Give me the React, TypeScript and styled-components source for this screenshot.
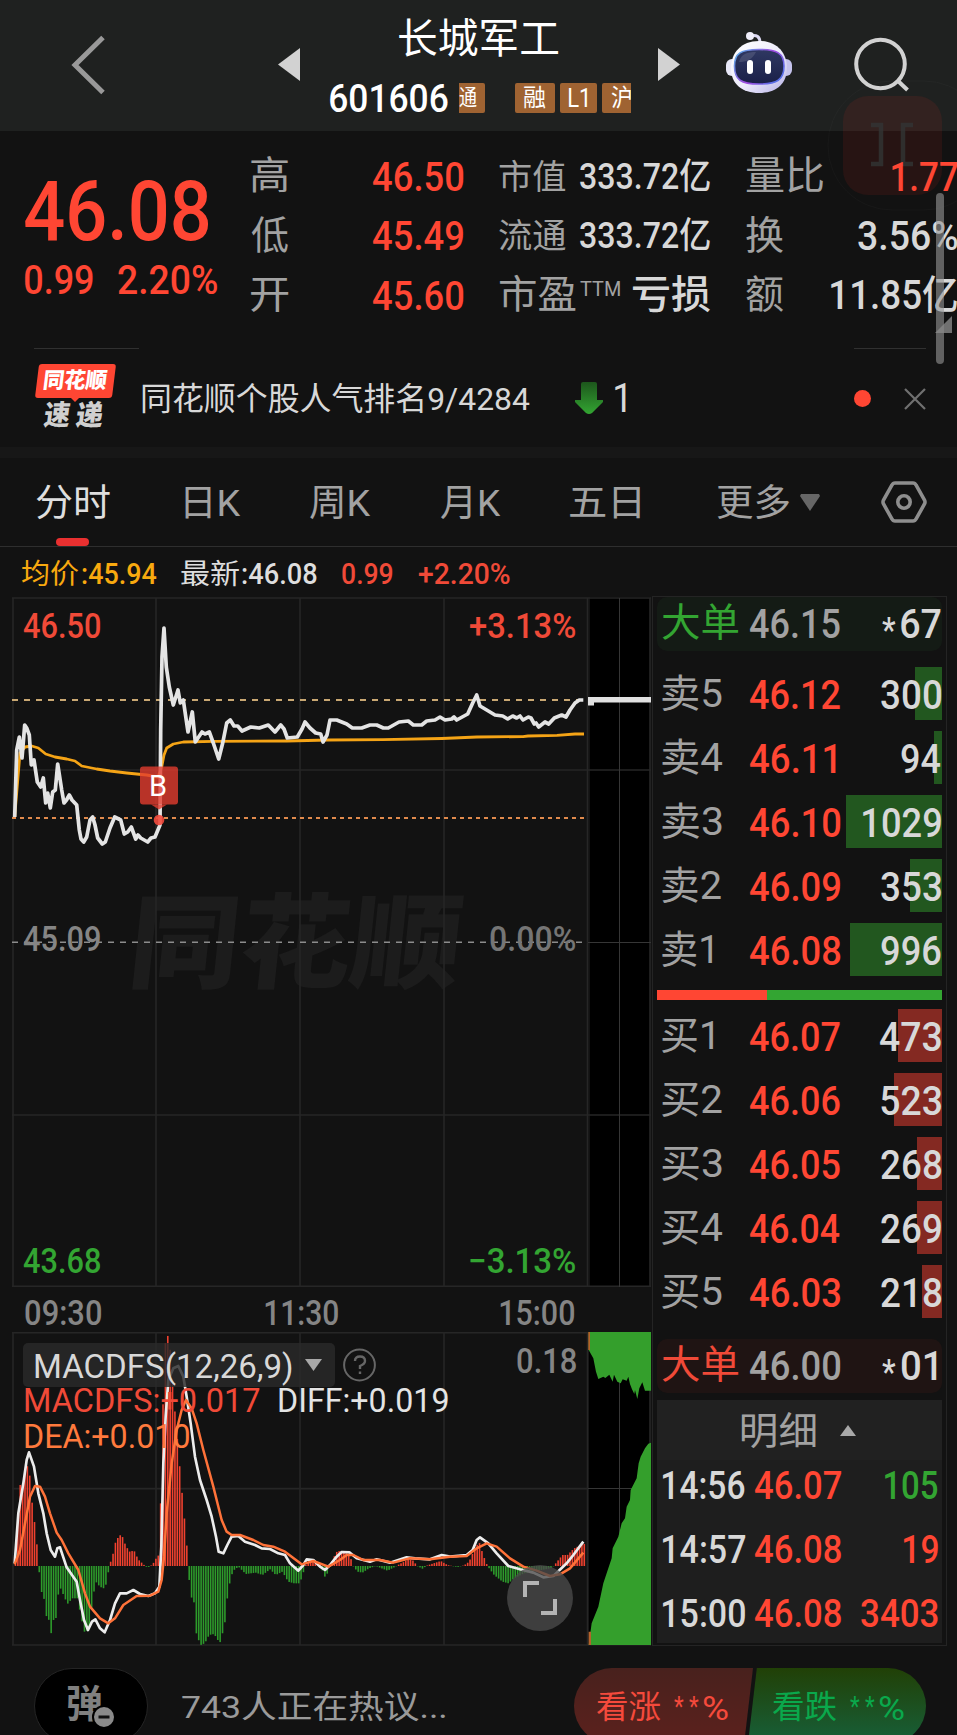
import React from 'react';
import styled, { createGlobalStyle } from 'styled-components';

const FONT = 'Roboto, "Noto Sans CJK SC", sans-serif';
const RED = '#ff4633';
const GREEN = '#33a532';
const GRAY = '#a2a2a2';
const LIGHT = '#d8d8d8';

const Global = createGlobalStyle`
  * { box-sizing: border-box; }
  body { margin: 0; background: #121212; font-family: ${FONT}; }
`;

/* ---------- text whose drawn width is fitted to a column ---------- */
const Slot = styled.span<{ $w: number; $ml: number; $size: number }>`
  display: block;
  flex: none;
  width: ${p => p.$w}px;
  height: ${p => p.$size}px;
  margin-left: ${p => p.$ml}px;
`;
const Glyphs = styled.span<{ $size: number; $color: string; $weight: number }>`
  display: inline-block;
  white-space: pre;
  transform-origin: 0 50%;
  font: ${p => p.$weight} ${p => p.$size}px/1 ${FONT};
  color: ${p => p.$color};
`;
let ctx: CanvasRenderingContext2D | null = null;
function measure(text: string, font: string) {
  if (!ctx) ctx = document.createElement('canvas').getContext('2d');
  ctx!.font = font;
  const m = ctx!.measureText(text);
  return { left: m.actualBoundingBoxLeft, ink: m.actualBoundingBoxLeft + m.actualBoundingBoxRight };
}
interface FitProps { t: string; w: number; size: number; color?: string; weight?: number; ml?: number; dy?: number; skew?: number }
function Fit({ t, w, size, color = LIGHT, weight = 500, ml = 0, dy = 0, skew = 0 }: FitProps) {
  const { left, ink } = measure(t, `${weight} ${size}px ${FONT}`);
  const k = w / ink;
  return (
    <Slot $w={w} $ml={ml} $size={size}>
      <Glyphs $size={size} $color={color} $weight={weight}
        style={{ transform: `translate(${left * k}px, ${dy}px) skewX(${-skew}deg) scaleX(${k})` }}>{t}</Glyphs>
    </Slot>
  );
}

const Page = styled.div`
  position: relative;
  width: 957px;
  height: 1735px;
  overflow: hidden;
  background: #121212;
`;

/* ---------- header ---------- */
const Header = styled.header`
  display: flex;
  height: 131px;
  background: #1f2120;
`;
const HeaderIcon = styled.svg<{ $ml: number; $mt: number }>`
  flex: none;
  display: block;
  margin: ${p => p.$mt}px 0 0 ${p => p.$ml}px;
`;
const TitleBlock = styled.div`
  width: 302px;
  margin-left: 29px;
  padding-top: 19px;
`;
const CodeRow = styled.div`
  display: flex;
  align-items: center;
  height: 40px;
  margin-top: 18px;
`;
const Tag = styled.span<{ $w: number; $ml: number; $cut?: 'left' | 'right' }>`
  flex: none;
  display: flex;
  align-items: center;
  width: ${p => p.$w}px;
  height: 30px;
  margin-left: ${p => p.$ml}px;
  overflow: hidden;
  background: #9f6332;
  border-radius: ${p => (p.$cut === 'left' ? '0 2px 2px 0' : p.$cut === 'right' ? '2px 0 0 2px' : '2px')};
`;
const GhostButton = styled.svg`
  position: absolute;
  left: 827px;
  top: 80px;
`;

/* ---------- quote ---------- */
const Quote = styled.section`
  display: flex;
  height: 217px;
`;
const LastPrice = styled.div`
  flex: none;
  width: 251px;
  padding: 38px 0 0 25px;
`;
const ChangeRow = styled.div`
  display: flex;
  margin-top: 8px;
`;
const StatCol = styled.div<{ $w: number; $ml: number }>`
  flex: none;
  width: ${p => p.$w}px;
  margin-left: ${p => p.$ml}px;
  padding-top: 16px;
`;
const StatRow = styled.div`
  display: flex;
  align-items: center;
  height: 59.5px;
`;
const Spring = styled.span`flex: 1;`;
const ScrollThumb = styled.div`
  position: absolute;
  left: 936px;
  top: 193px;
  width: 8px;
  height: 171px;
  border-radius: 4px;
  background: rgba(150, 150, 150, .6);
`;
const Corner = styled.svg`
  position: absolute;
  left: 935px;
  top: 316px;
`;

/* ---------- notice ---------- */
const Rules = styled.div`
  display: flex;
  justify-content: space-between;
  padding: 0 31px 0 34px;
`;
const Rule = styled.i<{ $w: number }>`
  width: ${p => p.$w}px;
  height: 1px;
  background: #303030;
`;
const Notice = styled.section`
  display: flex;
  align-items: center;
  height: 98px;
  padding-left: 34px;
`;
const Logo = styled.div`
  width: 84px;
  height: 68px;
`;
const LogoBadge = styled.div`
  position: relative;
  width: 77px;
  height: 34px;
  margin-left: 3px;
  padding: 6px 0 0 7px;
  &::before {
    content: '';
    position: absolute;
    inset: 0;
    background: ${RED};
    border-radius: 3px;
    transform: skewX(-7deg);
  }
  &::after {
    content: '';
    position: absolute;
    left: 33px;
    top: 33px;
    border: 5px solid transparent;
    border-top-color: ${RED};
  }
  > * { position: relative; }
`;
const LogoWord = styled.div`
  display: flex;
  margin-top: 5px;
`;
const Dot = styled.i`
  flex: none;
  width: 17px;
  height: 17px;
  margin-left: 228px;
  border-radius: 50%;
  background: ${RED};
`;
const Band = styled.div`
  height: 11px;
  background: #171717;
`;

/* ---------- tabs ---------- */
const Tabs = styled.nav`
  display: flex;
  align-items: center;
  height: 89px;
  border-bottom: 1px solid #2e2e2e;
`;
const Tab = styled.div<{ $ml: number }>`
  position: relative;
  flex: none;
  margin-left: ${p => p.$ml}px;
`;
const Underline = styled.i`
  position: absolute;
  left: 20px;
  top: 54px;
  width: 33px;
  height: 8px;
  border-radius: 4px;
  background: #e93030;
`;
const InfoBar = styled.div`
  display: flex;
  align-items: center;
  height: 49px;
  padding: 7px 0 0 22px;
`;

/* ---------- charts ---------- */
const Main = styled.main`
  display: flex;
  height: 1050px;
`;
const Charts = styled.div`
  position: relative;
  flex: none;
  width: 652px;
`;
const Plot = styled.svg`display: block;`;
const Axis = styled.div`
  display: flex;
  align-items: center;
  height: 45px;
  padding: 8px 0 0 25px;
`;
const Overlay = styled.div<{ $x: number; $y: number }>`
  position: absolute;
  display: flex;
  align-items: center;
  left: ${p => p.$x}px;
  top: ${p => p.$y}px;
`;
const Selector = styled(Overlay)`
  width: 312px;
  height: 44px;
  padding-left: 12px;
  border-radius: 5px;
  background: rgba(42, 42, 42, .82);
`;
const Expand = styled(Overlay)`
  width: 66px;
  height: 66px;
  justify-content: center;
  border-radius: 50%;
  background: rgba(74, 74, 74, .78);
`;

/* ---------- order book ---------- */
const Book = styled.aside`
  flex: none;
  width: 295px;
  padding: 0 4px;
  border: 1px solid #242424;
`;
const BigOrder = styled.div<{ $bg: string; $mt: number; $pr: number }>`
  display: flex;
  align-items: center;
  height: 54px;
  margin-top: ${p => p.$mt}px;
  padding: 0 ${p => p.$pr}px 0 5px;
  border-radius: 10px;
  background: ${p => p.$bg};
`;
const Levels = styled.div<{ $mt: number }>`
  display: grid;
  row-gap: 11px;
  margin-top: ${p => p.$mt}px;
`;
const Level = styled.div<{ $bar: number; $fill: string }>`
  display: flex;
  align-items: center;
  height: 53px;
  padding: 0 1px 0 5px;
  background: linear-gradient(${p => p.$fill}, ${p => p.$fill}) right / ${p => p.$bar}px 100% no-repeat;
`;
const Cell = styled.div<{ $w: number }>`
  flex: none;
  width: ${p => p.$w}px;
`;
const Ratio = styled.div`
  height: 10px;
  margin-top: 14px;
  background: linear-gradient(90deg, ${RED} 110px, ${GREEN} 110px);
`;
const Detail = styled.div`
  height: 243px;
  margin-top: 7px;
  background: #1e1e1e;
`;
const DetailHead = styled.div`
  display: flex;
  align-items: center;
  height: 60px;
  padding-left: 85px;
  background: #212121;
`;
const Trade = styled.div`
  display: flex;
  align-items: center;
  height: 50px;
  margin-bottom: 14px;
  padding: 0 4px 0 6px;
`;

/* ---------- footer ---------- */
const Footer = styled.footer`
  display: flex;
  height: 98px;
  padding: 22px 0 0 34px;
`;
const Barrage = styled.div`
  position: relative;
  flex: none;
  width: 114px;
  height: 76px;
  padding: 16px 0 0 33px;
  border: 1px solid #242424;
  border-radius: 38px;
  background: #000;
`;
const BarrageOff = styled.svg`
  position: absolute;
  left: 57px;
  top: 36px;
`;
const Discuss = styled.div`
  width: 426px;
  padding: 23px 0 0 34px;
`;
const Vote = styled.div<{ $side: 'up' | 'down' }>`
  flex: none;
  display: flex;
  width: 179px;
  height: 76px;
  margin-left: ${p => (p.$side === 'up' ? 0 : -6)}px;
  padding: 23px 0 0 ${p => (p.$side === 'up' ? 23 : 26)}px;
  border-radius: ${p => (p.$side === 'up' ? '38px 0 0 38px' : '0 38px 38px 0')};
  background: ${p => (p.$side === 'up' ? 'linear-gradient(#48211d, #5c211d)' : 'linear-gradient(#214006, #17603a)')};
  clip-path: ${p => (p.$side === 'up' ? 'polygon(0 0, 100% 0, 95% 100%, 0 100%)' : 'polygon(5.5% 0, 100% 0, 100% 100%, 0.5% 100%)')};
`;

/* ---------- chart data ---------- */
const PRICE = '14.7,817 16.7,750 19.3,737 22,758 24.7,725 26.7,728 29.3,735 31.3,765 34,760 37.3,782 40.7,787 43.3,778 45.7,803 47.7,793 50.3,808 52.7,792 55.3,790 57.7,764 61.7,790 64,803 66.5,800 69.3,795 72,800 76.7,805 79.3,830 81,839 83.7,842 86.7,837 90,820 92.7,817 95,825 97.7,838 102.3,844 105.3,842 110,828 114.7,817 120.7,820 124.3,834 127.7,832 131.3,827 135.7,839 138,835 140.7,838 147.7,842 151,838 155,837 160,825 160.7,730 162,657 164,628 166.3,667 169.3,687 173.3,705 178,690 180.3,703 183.3,700 188,732 192.3,712 195.3,742 202,732 205,734 209.3,732 213.3,743 218.7,759 222.7,743 226.7,723 230.3,720 234,726 237.7,726 242,731 250.7,727 259.3,728 268.3,725 275,732 280.7,725 284,729 287.3,738 297.3,737 302,729 305,722 310,728 315.7,733 320.7,734 323,742 327,735 330,720 336.7,720 346.7,724 352.3,728 361.7,728 370,725 376.7,725 383.3,728 388.3,728 399,722 408.3,721 413.3,725 421.7,725 426.7,721 435,720 440,717 445,720 451.7,719 454,717 456.7,720 467.7,714 472.7,703 476.7,695 480,706 486.7,710 495,715 502.7,716 507.7,719 512.7,716 516.7,718 520,716 523,720 528.3,717 531,718 534.3,724 536,723 538.7,727 545,722 548.7,724 554.3,718 561.7,715 566,717 570,710 575,703 579.3,700 583.3,700';
const AVERAGE = '14.7,817 20,753 25,747 31.7,746 38.3,748 45.7,754 55,757 66.7,759 75,761 81.7,766 96.7,769 110,771 126.7,773 146.7,775 158,777 161.7,767 164,755 166.7,748 173.3,744 183.3,742 213,741.3 287,741 328,740 383,739.7 441.7,738.5 477,737 523,736.6 528,736 557,735.3 575,734 584,734';
const DIFF = '44,1000 55,850 70,760 80,690 87,667 102,710 115,790 130,850 140,910 152,960 165,980 172,955 180,952 200,1012 230,1055 240,1110 252,1170 264,1200 276,1175 286,1168 300,1195 314,1207 330,1170 345,1120 360,1090 380,1090 400,1080 420,1092 445,1098 465,1090 478,1070 484,950 490,700 497,560 505,450 520,415 535,408 550,440 560,500 572,580 585,680 600,750 620,810 635,860 648,920 656,965 670,970 682,945 695,920 715,918 735,935 765,945 785,955 810,957 835,970 855,975 870,1000 895,1022 910,1005 920,988 940,990 960,1010 975,1020 990,1005 1010,980 1025,966 1048,967 1070,985 1110,995 1130,988 1170,998 1220,982 1245,985 1290,988 1325,975 1350,980 1400,975 1418,960 1430,930 1440,922 1465,940 1490,970 1525,1008 1560,1018 1600,1028 1630,1042 1660,1038 1700,1000 1720,975 1750,935';
const DEA = '44,1003 60,960 75,880 90,800 105,768 120,770 135,800 150,850 170,908 185,930 205,970 235,1020 255,1090 270,1130 300,1165 325,1180 345,1165 370,1125 410,1098 450,1097 475,1085 485,1050 492,980 500,850 515,700 530,600 545,540 558,510 575,535 590,580 610,660 640,770 665,870 680,905 695,915 720,915 760,930 790,945 820,950 855,965 905,1003 940,993 985,1010 1020,990 1040,975 1060,975 1090,990 1140,990 1180,998 1230,985 1290,988 1350,980 1400,978 1430,955 1460,940 1490,950 1530,985 1570,1010 1610,1022 1650,1038 1680,1033 1710,1015 1750,968';
const HIST: number[][] = [[44, 1000], [50, 865], [58, 765], [68, 765], [75, 703], [85, 715], [93, 810], [101, 875], [109, 950], [112, 1008], [116, 1030], [123, 1090], [131, 1110], [138, 1168], [146, 1170], [151, 1210], [158, 1170], [165, 1168], [172, 1095], [180, 1075], [188, 1095], [200, 1122], [215, 1105], [230, 1105], [243, 1170], [251, 1205], [265, 1200], [275, 1110], [285, 1055], [297, 1070], [308, 1075], [318, 1060], [325, 1008], [335, 980], [343, 940], [352, 922], [362, 912], [372, 940], [385, 965], [400, 962], [412, 988], [430, 1005], [440, 1013], [455, 1004], [470, 978], [476, 975], [480, 800], [484, 610], [492, 350], [499, 309], [507, 345], [515, 450], [522, 540], [535, 690], [543, 780], [550, 855], [558, 945], [561, 1008], [565, 1048], [571, 1100], [580, 1118], [587, 1215], [600, 1245], [612, 1240], [625, 1215], [640, 1212], [657, 1240], [664, 1215], [672, 1180], [680, 1100], [690, 1040], [700, 1020], [713, 1010], [735, 1032], [765, 1028], [785, 1035], [808, 1018], [825, 1035], [845, 1025], [862, 1055], [880, 1060], [895, 1060], [905, 1040], [912, 1008], [920, 998], [935, 990], [950, 998], [960, 1008], [972, 1040], [980, 1030], [987, 1008], [1000, 980], [1010, 962], [1035, 968], [1050, 985], [1057, 1008], [1070, 1025], [1085, 1028], [1105, 1015], [1125, 1008], [1160, 1022], [1180, 1012], [1195, 1003], [1220, 990], [1235, 990], [1250, 1008], [1265, 1016], [1280, 1006], [1320, 993], [1340, 1005], [1370, 1011], [1390, 1006], [1405, 995], [1420, 960], [1435, 935], [1447, 975], [1460, 1008], [1480, 1035], [1505, 1055], [1523, 1060], [1540, 1045], [1570, 1030], [1610, 1022], [1650, 1015], [1660, 1006], [1685, 975], [1700, 975], [1720, 955], [1740, 945], [1756, 940]];
const BARS = Array.from({ length: 240 }, (_, i) => {
  const x = 44 + i * 7.14;
  const j = Math.max(1, HIST.findIndex(p => p[0] >= x));
  const [a, b] = [HIST[j - 1], HIST[j]];
  return { x, y: a[1] + ((b[1] - a[1]) * (x - a[0])) / (b[0] - a[0]) };
});

function PriceChart() {
  return (
    <Plot width="652" height="691" viewBox="0 596 652 691">
      <rect x="590" y="597" width="60" height="690" fill="#000" />
      <g stroke="#262626" strokeWidth="1.6" fill="none">
        <path d="M12 598H651M12 770H651M588 1115H651M12 1115H588M12 1286.4H651" />
        <path d="M13 598V1287M156 598V1287M300 598V1287M444 598V1287M587.5 598V1287M650 598V1287" />
        <path d="M588 942.5H651M619.5 598V1287" strokeWidth="1" stroke="#363636" />
      </g>
      <path d="M12 700H584" stroke="#c9a873" strokeWidth="2" strokeDasharray="6 6" />
      <path d="M12 818H584" stroke="#e08a4c" strokeWidth="2" strokeDasharray="4 4" />
      <path d="M12 942.3H583" stroke="#8c8c8c" strokeWidth="1.6" strokeDasharray="6 6" />
      <polyline points={AVERAGE} fill="none" stroke="#f5a416" strokeWidth="2.8" strokeLinejoin="round" />
      <polyline points={PRICE} fill="none" stroke="#e4e4e4" strokeWidth="3.7" strokeLinejoin="round" />
      <path d="M588 697H651V702.5H594V705.5H588Z" fill="#e0e0e0" />
      <g fill="rgb(226,60,46)" fillOpacity=".8">
        <rect x="140" y="766.5" width="38" height="38" rx="3" />
        <path d="M151 804.5H167L159 809.5Z" />
      </g>
      <circle cx="159" cy="820" r="5.3" fill="#f24a3d" fillOpacity=".9" />
    </Plot>
  );
}

function MacdChart() {
  return (
    <Plot width="652" height="314" viewBox="0 1332 652 314">
      <rect x="589" y="1332" width="61" height="314" fill="#000" />
      <g stroke="#262626" strokeWidth="1.6" fill="none">
        <path d="M12 1332.8H588M12 1488.6H588M12 1645H651" />
        <path d="M13 1332V1645M156 1332V1645M300 1332V1645M444 1332V1645M587.5 1332V1645M650 1332V1645" />
        <path d="M588 1488.5H651M619.5 1332V1645" strokeWidth="1" stroke="#363636" />
      </g>
      <g transform="translate(0 1230) scale(.33333)">
        {BARS.map((b, i) => (
          <rect key={i} x={b.x} y={Math.min(b.y, 1008)} width="4.8" height={Math.max(1, Math.abs(b.y - 1008))}
            fill={b.y < 1008 ? '#f0412f' : '#2d9a2b'} />
        ))}
        <polyline points={DIFF} fill="none" stroke="#ececec" strokeWidth="8" strokeLinejoin="round" />
        <polyline points={DEA} fill="none" stroke="#ff7239" strokeWidth="7.5" strokeLinejoin="round" />
        <g transform="translate(960 0)" fill="#349f2c">
          <path d="M806 306V360L820 385L828 425L835 447L850 440L856 444L868 434L878 455L882 434L892 455L902 460L908 448L920 452L925 440L930 462L936 478L943 492L945 480L952 507L958 475L967 457L975 482H993V306Z" />
          <path d="M806 1245L815 1180L835 1130L850 1060L875 985L878 955L895 920L905 880L915 865L920 830L930 810L932 780L950 745L956 700L962 680L975 655L985 641L993 638V1245Z" />
          <path d="M805 306h5v54h-5zM806 1205h7v40h-7z" fill="#b5632c" />
        </g>
      </g>
    </Plot>
  );
}

function Robot() {
  return (
    <HeaderIcon $ml={46} $mt={31} width="66" height="63" viewBox="0 0 66 63">
      <defs>
        <linearGradient id="shell" x1="0" y1="0" x2="1" y2="1">
          <stop offset="0" stopColor="#fff" /><stop offset=".55" stopColor="#ecebfb" /><stop offset="1" stopColor="#b5b0e6" />
        </linearGradient>
        <linearGradient id="rim" x1="0" y1="0" x2="1" y2=".6">
          <stop offset="0" stopColor="#52b4e8" /><stop offset=".6" stopColor="#a04be0" /><stop offset="1" stopColor="#5a6fe8" />
        </linearGradient>
        <linearGradient id="visor" x1="0" y1="0" x2="0" y2="1">
          <stop offset="0" stopColor="#2f3862" /><stop offset="1" stopColor="#1a2048" />
        </linearGradient>
      </defs>
      <path d="M24 5C31 3 34 6 34 12" fill="none" stroke="#dcd9f2" strokeWidth="3" />
      <circle cx="24" cy="5" r="4" fill="#efeefa" />
      <rect x="0" y="28" width="12" height="17" rx="6" fill="#e8e8f8" />
      <rect x="54" y="28" width="12" height="17" rx="6" fill="#c5c3ec" />
      <path d="M33 10C51 10 61 22 61 37C61 53 50 62 33 62C16 62 5 53 5 37C5 22 15 10 33 10Z" fill="url(#shell)" />
      <path d="M33 18.500C51 18.500 58 22 58 35C58 49 51 53 33 53C15 53 8.500 49 8.500 35C8.500 22 15 18.500 33 18.500Z" fill="url(#visor)" stroke="url(#rim)" strokeWidth="1.6" />
      <path d="M13 31C15 23 21 21 30 21C26 29 20 31 13 31Z" fill="#fff" opacity=".12" />
      <rect x="21" y="29" width="6" height="14" rx="3" fill="#fff" />
      <rect x="39" y="29" width="6" height="14" rx="3" fill="#fff" />
    </HeaderIcon>
  );
}

const SELLS: [string, number, string, string, number, number][] = [
  ['卖5', 60, '46.12', '300', 60, 27], ['卖4', 61, '46.11', '94', 40, 8], ['卖3', 60, '46.10', '1029', 78, 96],
  ['卖2', 59, '46.09', '353', 60, 32], ['卖1', 50, '46.08', '996', 60, 92],
];
const BUYS: [string, number, string, string, number, number][] = [
  ['买1', 51, '46.07', '473', 61, 44], ['买2', 60, '46.06', '523', 60, 48], ['买3', 60, '46.05', '268', 60, 25],
  ['买4', 61, '46.04', '269', 60, 25], ['买5', 60, '46.03', '218', 60, 20],
];
const TRADES: [string, string, string, number, string][] = [
  ['14:56', '46.07', '105', 53, GREEN], ['14:57', '46.08', '19', 34, RED], ['15:00', '46.08', '3403', 77, RED],
];

function LevelRows({ rows, fill, mt }: { rows: typeof SELLS; fill: string; mt: number }) {
  return (
    <Levels $mt={mt}>
      {rows.map(([name, nw, price, qty, qw, bar]) => (
        <Level key={name} $bar={bar} $fill={fill}>
          <Cell $w={88}><Fit t={name} w={nw} size={39} color={GRAY} weight={400} dy={1} /></Cell>
          <Fit t={price} w={price === '46.11' ? 86 : 90} size={40.5} color={RED} dy={2} />
          <Spring />
          <Fit t={qty} w={qw} size={40.5} dy={2} />
        </Level>
      ))}
    </Levels>
  );
}

function VoteText({ label, color }: { label: string; color: string }) {
  return (
    <>
      <Fit t={label} w={63} size={32} color={color} weight={400} />
      <Fit t="*" w={10} size={27} color={color} weight={400} ml={14} dy={3} />
      <Fit t="*" w={10} size={27} color={color} weight={400} ml={5} dy={3} />
      <Fit t="%" w={25} size={34} color={color} weight={400} ml={4} />
    </>
  );
}

export default function App() {
  return (
    <Page>
      <Global />
      <Header>
        <HeaderIcon $ml={69} $mt={34} width="38" height="62" viewBox="0 0 38 62">
          <path d="M34 3.500L6 31L34 58.500" fill="none" stroke="#999" strokeWidth="5" />
        </HeaderIcon>
        <HeaderIcon $ml={171} $mt={48} width="22" height="33" viewBox="0 0 22 33"><path d="M22 0V33L0 16.500Z" fill="#d2d2d2" /></HeaderIcon>
        <TitleBlock>
          <Fit t="长城军工" w={159} size={41} ml={70} color="#fff" weight={400} />
          <CodeRow>
            <Fit t="601606" w={118} size={38.5} color="#fff" dy={1} ml={1} />
            <Tag $w={26} $ml={11} $cut="left"><Fit t="通" w={18} size={22} color="#fff" weight={400} ml={0} /></Tag>
            <Tag $w={40} $ml={30}><Fit t="融" w={22} size={24} color="#fff" weight={400} ml={9} /></Tag>
            <Tag $w={37} $ml={5}><Fit t="L1" w={18} size={25} color="#fff" weight={400} ml={9} /></Tag>
            <Tag $w={29} $ml={5} $cut="right"><Fit t="沪" w={20} size={24} color="#fff" weight={400} ml={9} /></Tag>
          </CodeRow>
        </TitleBlock>
        <HeaderIcon $ml={27} $mt={48} width="22" height="33" viewBox="0 0 22 33"><path d="M0 0V33L22 16.500Z" fill="#d2d2d2" /></HeaderIcon>
        <Robot />
        <HeaderIcon $ml={61} $mt={36} width="58" height="58" viewBox="0 0 58 58">
          <circle cx="27.500" cy="28" r="24.300" fill="none" stroke="#d2d2d2" strokeWidth="4" />
          <path d="M44.500 44.500L54.500 54" stroke="#d2d2d2" strokeWidth="4" />
        </HeaderIcon>
      </Header>
      <GhostButton width="130" height="132" viewBox="827 80 130 132">
        <rect x="828" y="81" width="160" height="129" rx="64" fill="none" stroke="#fff" strokeOpacity=".025" />
        <rect x="843" y="96" width="99" height="99" rx="25" fill="#ff2a20" fillOpacity=".09" />
        <path d="M871 125H881V164H871M913 125H903V164H913" fill="none" stroke="#323434" strokeOpacity=".8" strokeWidth="4.500" />
      </GhostButton>

      <Quote>
        <LastPrice>
          <Fit t="46.08" w={184} size={83} color={RED} dy={1} />
          <ChangeRow>
            <Fit t="0.99" w={68} size={40} color={RED} dy={1} />
            <Fit t="2.20%" w={99} size={40} color={RED} ml={25} dy={1} />
          </ChangeRow>
        </LastPrice>
        <StatCol $w={212} $ml={0}>
          <StatRow><Fit t="高" w={37} size={39} color={GRAY} weight={400} /><Spring /><Fit t="46.50" w={90} size={40.5} color={RED} /></StatRow>
          <StatRow><Fit t="低" w={37} size={39} color={GRAY} weight={400} /><Spring /><Fit t="45.49" w={90} size={40.5} color={RED} /></StatRow>
          <StatRow><Fit t="开" w={37} size={39} color={GRAY} weight={400} /><Spring /><Fit t="45.60" w={90} size={40.5} color={RED} /></StatRow>
        </StatCol>
        <StatCol $w={211} $ml={36}>
          <StatRow><Fit t="市值" w={67} size={34.5} color={GRAY} weight={400} /><Spring /><Fit t="333.72亿" w={130} size={36.5} /></StatRow>
          <StatRow><Fit t="流通" w={67} size={34.5} color={GRAY} weight={400} /><Spring /><Fit t="333.72亿" w={130} size={36.5} /></StatRow>
          <StatRow>
            <Fit t="市盈" w={77} size={39} color={GRAY} weight={400} /><Fit t="TTM" w={40} size={21} color={GRAY} weight={400} ml={4} dy={-6} />
            <Spring /><Fit t="亏损" w={78} size={39} />
          </StatRow>
        </StatCol>
        <StatCol $w={240} $ml={36}>
          <StatRow><Fit t="量比" w={77} size={39} color={GRAY} weight={400} /><Fit t="1.77" w={66} size={40.5} color={RED} ml={69} /></StatRow>
          <StatRow><Fit t="换" w={37} size={39} color={GRAY} weight={400} /><Fit t="3.56%" w={100} size={40.5} ml={75} /></StatRow>
          <StatRow><Fit t="额" w={37} size={39} color={GRAY} weight={400} /><Fit t="11.85亿" w={126} size={40} ml={48} /></StatRow>
        </StatCol>
      </Quote>
      <ScrollThumb />
      <Corner width="17" height="17" viewBox="0 0 17 17"><path d="M0 17L17 0V17Z" fill="#888" fillOpacity=".8" /></Corner>

      <Rules><Rule $w={105} /><Rule $w={72} /></Rules>
      <Notice>
        <Logo>
          <LogoBadge><Fit t="同花顺" w={63} size={22} color="#fff" weight={900} skew={7} ml={0} /></LogoBadge>
          <LogoWord>
            <Fit t="速" w={26} size={28} color="#d0d0d0" weight={900} skew={7} ml={10} dy={-1} />
            <Fit t="递" w={27} size={28} color="#d0d0d0" weight={900} skew={7} ml={6} dy={-1} />
          </LogoWord>
        </Logo>
        <Fit t="同花顺个股人气排名9/4284" w={388} size={32} ml={24} weight={400} dy={1} />
        <HeaderIcon $ml={45} $mt={0} width="28" height="32" viewBox="0 0 28 32">
          <defs><linearGradient id="down" x1="0" y1="0" x2="0" y2="1"><stop offset="0" stopColor="#1d561c" /><stop offset="1" stopColor="#33a532" /></linearGradient></defs>
          <path d="M6 0H20Q22 0 22 2V18H28V20L17 31Q14 33 11 31L0 20V18H6V2Q6 0 8 0Z" fill="url(#down)" />
        </HeaderIcon>
        <Fit t="1" w={11} size={40} ml={12} weight={400} dy={1} />
        <Dot />
        <HeaderIcon $ml={33} $mt={1} width="22" height="22" viewBox="0 0 22 22"><path d="M1 1L21 21M21 1L1 21" stroke="#707070" strokeWidth="2.200" /></HeaderIcon>
      </Notice>
      <Band />

      <Tabs>
        <Tab $ml={36}><Fit t="分时" w={74} size={37} color="#dedede" weight={400} dy={1} /><Underline /></Tab>
        <Tab $ml={75}><Fit t="日K" w={56} size={37} color={GRAY} weight={400} dy={1} /></Tab>
        <Tab $ml={69}><Fit t="周K" w={61} size={37} color={GRAY} weight={400} dy={1} /></Tab>
        <Tab $ml={70}><Fit t="月K" w={60} size={37} color={GRAY} weight={400} dy={1} /></Tab>
        <Tab $ml={69}><Fit t="五日" w={70} size={37} color={GRAY} weight={400} dy={1} /></Tab>
        <Tab $ml={77}><Fit t="更多" w={72} size={37} color={GRAY} weight={400} dy={1} /></Tab>
        <HeaderIcon $ml={11} $mt={0} width="20" height="17" viewBox="0 0 20 17"><path d="M1 0H19L20 2L10 17L0 2Z" fill="#666" /></HeaderIcon>
        <HeaderIcon $ml={61} $mt={0} width="46" height="44" viewBox="0 0 46 44">
          <path d="M14 3H32Q34 3 35 5L43.500 20Q44.500 22 43.500 24L35 39Q34 41 32 41H14Q12 41 11 39L2.500 24Q1.500 22 2.500 20L11 5Q12 3 14 3Z" fill="none" stroke="#8e8e8e" strokeWidth="3.600" />
          <circle cx="23" cy="22" r="6.200" fill="none" stroke="#8e8e8e" strokeWidth="3.600" />
        </HeaderIcon>
      </Tabs>
      <InfoBar>
        <Fit t="均价" w={57} size={28} color="#f8a90f" weight={400} />
        <Fit t=":45.94" w={75} size={29.5} color="#f8a90f" ml={3} />
        <Fit t="最新" w={58} size={28} color="#dedede" weight={400} ml={24} />
        <Fit t=":46.08" w={75} size={29.5} color="#dedede" ml={3} />
        <Fit t="0.99" w={51} size={29.5} color="#f04a38" ml={25} />
        <Fit t="+2.20%" w={92} size={29.5} color="#f04a38" ml={25} />
      </InfoBar>

      <Main>
        <Charts>
          <Overlay $x={137} $y={297}><Fit t="同花顺" w={322} size={103} color="#1c1c1c" weight={900} skew={6} /></Overlay>
          <Overlay $x={0} $y={0}><PriceChart /></Overlay>
          <Overlay $x={23} $y={13}><Fit t="46.50" w={77} size={34.500} color="#f04a38" /></Overlay>
          <Overlay $x={470} $y={13}><Fit t="+3.13%" w={105} size={34.500} color="#f04a38" /></Overlay>
          <Overlay $x={23} $y={326}><Fit t="45.09" w={77} size={34.500} color="#858585" /></Overlay>
          <Overlay $x={490} $y={326}><Fit t="0.00%" w={85} size={34.500} color="#757575" /></Overlay>
          <Overlay $x={23} $y={648}><Fit t="43.68" w={77} size={34.500} color={GREEN} /></Overlay>
          <Overlay $x={470} $y={648}><Fit t="−3.13%" w={105} size={34.500} color={GREEN} /></Overlay>
          <Overlay $x={151} $y={175}><Fit t="B" w={15} size={29} color="#fff" weight={400} dy={1} /></Overlay>
          <Overlay $x={0} $y={691}>
            <Axis>
              <Fit t="09:30" w={76} size={34.500} color="#858585" />
              <Fit t="11:30" w={73} size={34.500} color="#858585" ml={164} />
              <Fit t="15:00" w={74} size={34.500} color="#858585" ml={162} />
            </Axis>
          </Overlay>
          <Overlay $x={0} $y={736}><MacdChart /></Overlay>
          <Selector $x={23} $y={747}>
            <Fit t="MACDFS(12,26,9)" w={257} size={33} weight={400} dy={1} />
            <HeaderIcon $ml={13} $mt={0} width="17" height="12" viewBox="0 0 17 12"><path d="M0 0H17L8.500 12Z" fill="#a8a8a8" /></HeaderIcon>
          </Selector>
          <Overlay $x={343} $y={752}>
            <Plot width="34" height="34" viewBox="0 0 34 34" fill="none" stroke="#666" strokeWidth="2">
              <circle cx="16.500" cy="17" r="15.400" />
              <path d="M12 13Q12 8.500 17 8.500T22 13Q22 16 17 18V21M17 23.500V26" strokeWidth="2.400" />
            </Plot>
          </Overlay>
          <Overlay $x={517} $y={748}><Fit t="0.18" w={59} size={34.500} color="#858585" /></Overlay>
          <Overlay $x={25} $y={788}>
            <Fit t="MACDFS:+0.017" w={235} size={33} color="#f04a38" weight={400} />
            <Fit t="DIFF:+0.019" w={169} size={33} color="#e4e4e4" weight={400} ml={19} />
          </Overlay>
          <Overlay $x={25} $y={824}><Fit t="DEA:+0.010" w={164} size={33} color="#ff7a3d" weight={400} /></Overlay>
          <Expand $x={507} $y={969}>
            <Plot width="36" height="36" viewBox="0 0 36 36"><path d="M3 17V3H17M33 19V33H19" fill="none" stroke="#b4b4b4" strokeWidth="4" /></Plot>
          </Expand>
        </Charts>

        <Book>
          <BigOrder $bg="#141b15" $mt={0} $pr={1}>
            <Cell $w={88}><Fit t="大单" w={76} size={39} color={GREEN} weight={400} dy={-1} /></Cell>
            <Fit t="46.15" w={90} size={40.500} color={GRAY} /><Spring />
            <Fit t="*" w={14} size={35} dy={6} /><Fit t="67" w={40} size={40.500} ml={5} />
          </BigOrder>
          <LevelRows rows={SELLS} fill="#22571f" mt={16} />
          <Ratio />
          <LevelRows rows={BUYS} fill="#842922" mt={9} />
          <BigOrder $bg="#1f1413" $mt={21} $pr={5}>
            <Cell $w={88}><Fit t="大单" w={76} size={39} color="#f04a38" weight={400} dy={-1} /></Cell>
            <Fit t="46.00" w={90} size={40.500} color={GRAY} /><Spring />
            <Fit t="*" w={14} size={35} dy={6} /><Fit t="01" w={35} size={40.500} ml={6} />
          </BigOrder>
          <Detail>
            <DetailHead>
              <Fit t="明细" w={74} size={38} color={GRAY} weight={400} dy={1} />
              <HeaderIcon $ml={24} $mt={0} width="16" height="11" viewBox="0 0 16 11"><path d="M0 11H16L8 0Z" fill="#a8a8a8" /></HeaderIcon>
            </DetailHead>
            {TRADES.map(([time, price, qty, w, color]) => (
              <Trade key={time}>
                <Fit t={time} w={82} size={38} dy={1} />
                <Fit t={price} w={86} size={38} color={RED} ml={10} dy={1} />
                <Spring />
                <Fit t={qty} w={w} size={38} color={color} dy={1} />
              </Trade>
            ))}
          </Detail>
        </Book>
      </Main>

      <Footer>
        <Barrage>
          <Fit t="弹" w={34} size={38} color="#808080" weight={700} />
          <BarrageOff width="24" height="24" viewBox="0 0 24 24"><circle cx="12" cy="12" r="11" fill="#8a8a8a" stroke="#000" strokeWidth="2" /><path d="M6.500 12H17.500" stroke="#111" strokeWidth="3" /></BarrageOff>
        </Barrage>
        <Discuss><Fit t="743人正在热议..." w={263} size={32} color="#9a9a9a" weight={400} /></Discuss>
        <Vote $side="up"><VoteText label="看涨" color="#f54a3c" /></Vote>
        <Vote $side="down"><VoteText label="看跌" color="#0aa84c" /></Vote>
      </Footer>
    </Page>
  );
}
